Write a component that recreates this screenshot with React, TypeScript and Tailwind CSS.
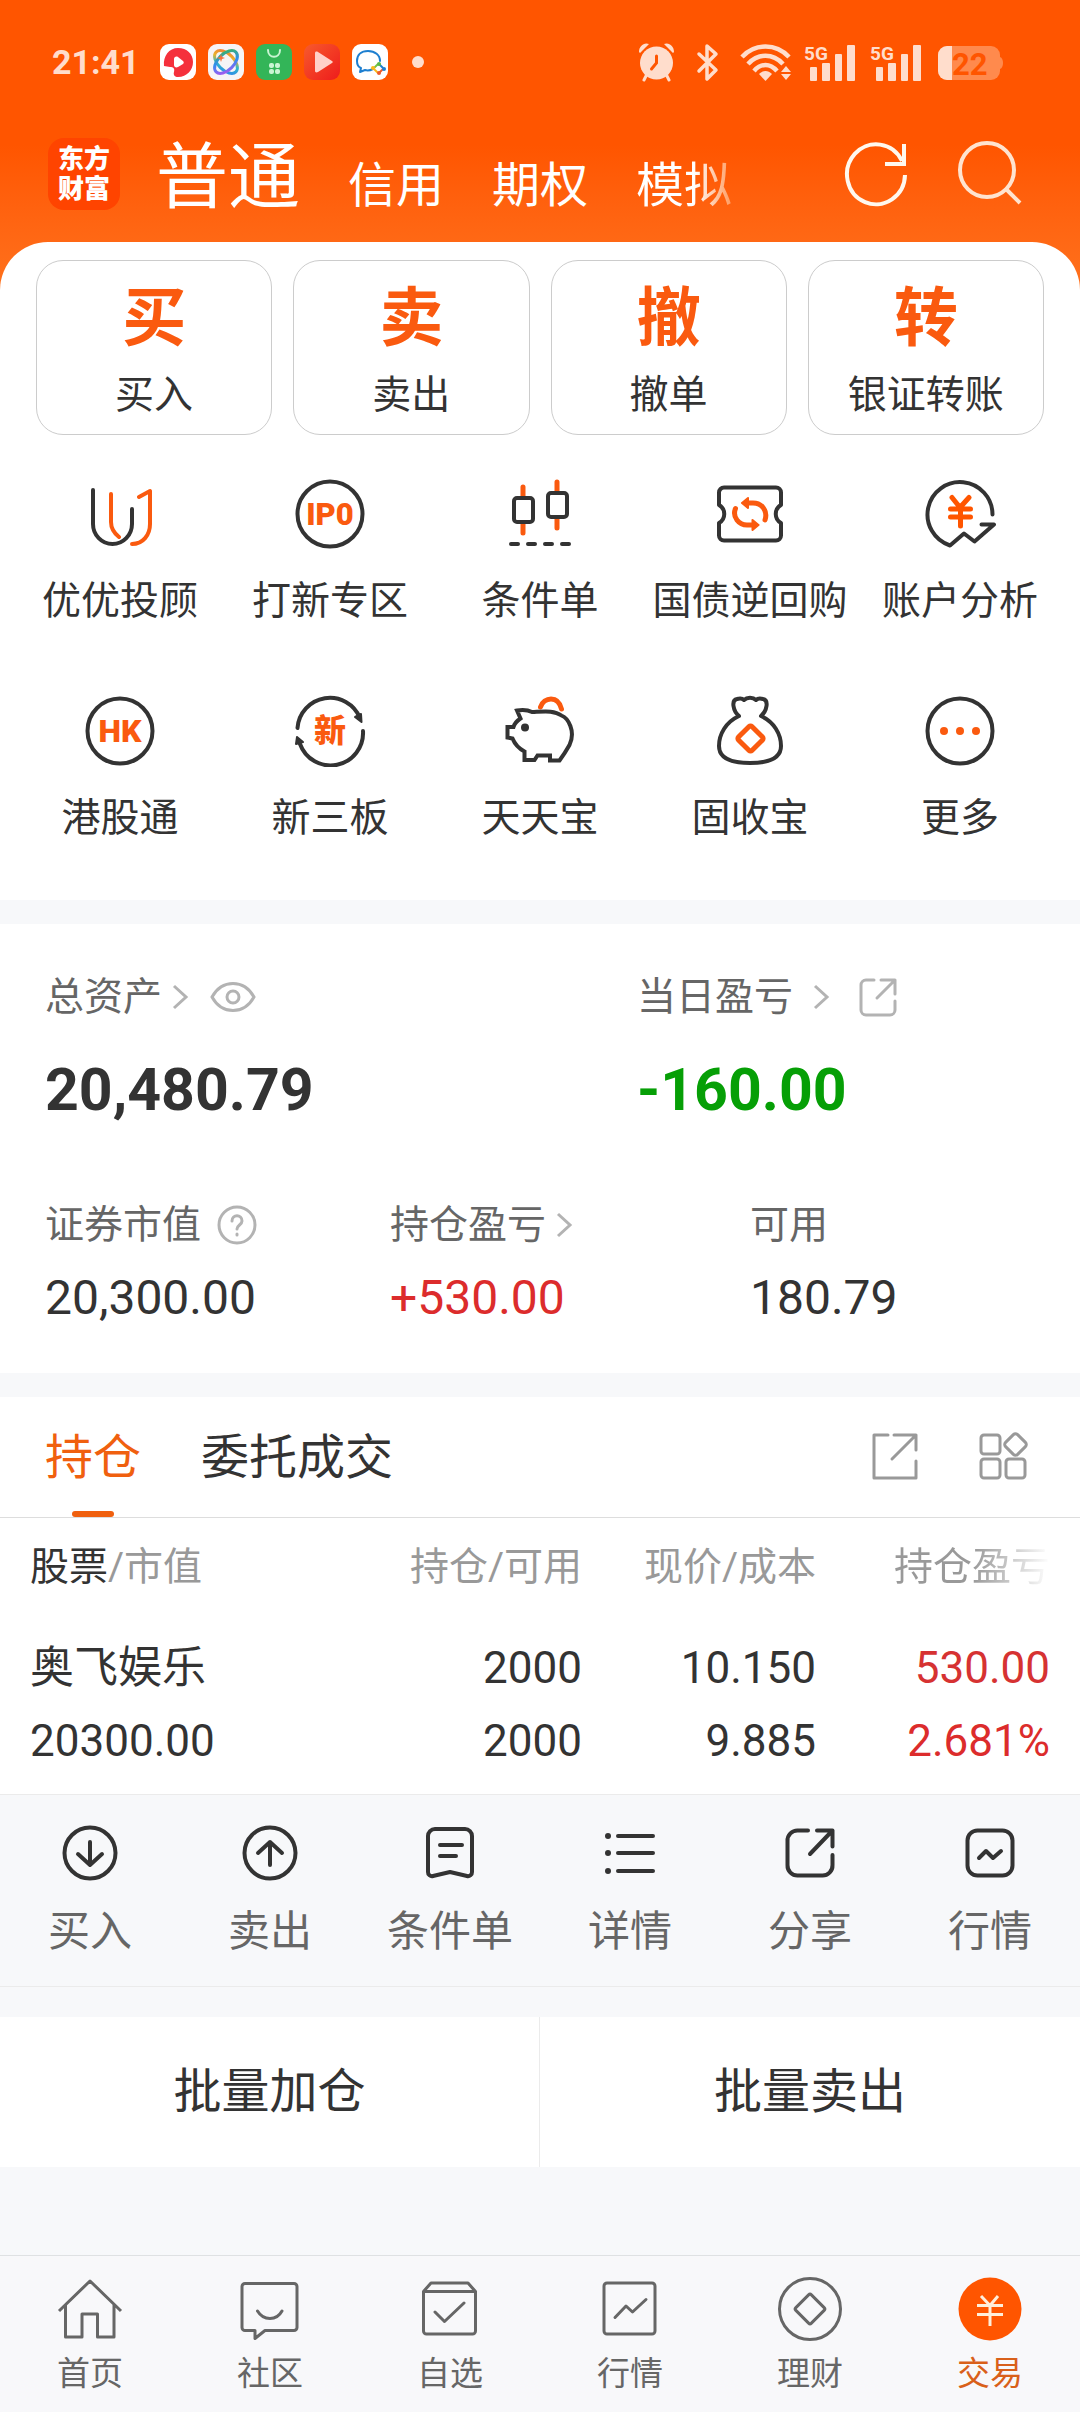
import React from 'react';

const INK = '#333333';
const ORANGE = '#fa5a0f';
const PALE = '#ffddcc';

type IconProps = { size?: number; children: React.ReactNode; color?: string; width?: number };

function Icon({ size = 72, color = INK, width = 4, children }: IconProps) {
  return (
    <svg
      width={size}
      height={size}
      viewBox={`0 0 ${size} ${size}`}
      fill="none"
      stroke={color}
      strokeWidth={width}
      strokeLinecap="round"
      strokeLinejoin="round"
      className="shrink-0"
      aria-hidden="true"
    >
      {children}
    </svg>
  );
}

/* ---------- status bar ---------- */

function Signal() {
  return (
    <svg width="52" height="40" viewBox="0 0 52 40" fill={PALE} aria-hidden="true">
      <text x="0" y="18" fontSize="19" fontWeight="700" fontFamily="Roboto, sans-serif">5G</text>
      <rect x="6" y="25" width="7" height="14" rx="1" />
      <rect x="18" y="21" width="8" height="18" rx="1" />
      <rect x="31" y="12" width="7" height="27" rx="1" />
      <rect x="43" y="3" width="8" height="36" rx="1" />
    </svg>
  );
}

function StatusBar() {
  return (
    <div className="flex h-10 items-center justify-between pr-5 pl-1">
      <div className="flex items-center gap-3">
        <span className="mr-3 w-[84px] text-[34px] leading-10 font-bold text-[#ffddcc]">21:41</span>
        <svg width="36" height="36" viewBox="0 0 36 36" aria-hidden="true">
          <rect width="36" height="36" rx="9" fill="#fff" />
          <path d="M4 22C3 12 9 4 18 4s15 6 15 14-6 15-15 15c-3 0-5-2-4-5 1-4-1-5-4-5z" fill="#f5303c" />
          <path d="M14 15c0-2 2-3 4-2l5 4c1 1 1 2 0 3l-5 3c-2 1-4 0-4-2z" fill="#fff" />
        </svg>
        <svg width="36" height="36" viewBox="0 0 36 36" fill="none" aria-hidden="true">
          <defs>
            <linearGradient id="orbit" x1="0" y1="0" x2="1" y2="1">
              <stop offset="0" stopColor="#f7703a" />
              <stop offset="0.35" stopColor="#e8b32c" />
              <stop offset="0.6" stopColor="#2fb8c9" />
              <stop offset="1" stopColor="#2f7df0" />
            </linearGradient>
            <linearGradient id="orbit2" x1="1" y1="0" x2="0" y2="1">
              <stop offset="0" stopColor="#3cba4e" />
              <stop offset="0.5" stopColor="#2f8df0" />
              <stop offset="1" stopColor="#c04df0" />
            </linearGradient>
          </defs>
          <rect width="36" height="36" rx="9" fill="#f6f4f6" />
          <ellipse cx="18" cy="18" rx="14" ry="8" transform="rotate(45 18 18)" stroke="url(#orbit)" strokeWidth="3" />
          <ellipse cx="18" cy="18" rx="14" ry="8" transform="rotate(-45 18 18)" stroke="url(#orbit2)" strokeWidth="3" />
          <path d="M13 10l1 3 3 1-3 1-1 3-1-3-3-1 3-1z" fill="#f7703a" />
        </svg>
        <svg width="36" height="36" viewBox="0 0 36 36" fill="none" aria-hidden="true">
          <rect width="36" height="36" rx="9" fill="#33b558" />
          <path d="M12 6c0 9 12 9 12 0" stroke="#c9f5d3" strokeWidth="2" strokeLinecap="round" />
          <g fill="#c9f5d3">
            <rect x="13" y="19" width="5" height="5" rx="2" />
            <rect x="19" y="19" width="5" height="5" rx="2" />
            <rect x="13" y="25" width="5" height="5" rx="2" />
            <rect x="19" y="25" width="5" height="5" rx="2" />
          </g>
        </svg>
        <svg width="36" height="36" viewBox="0 0 36 36" aria-hidden="true">
          <defs>
            <linearGradient id="play" x1="0" y1="0" x2="1" y2="1">
              <stop offset="0" stopColor="#f75a2c" />
              <stop offset="1" stopColor="#ee1c1c" />
            </linearGradient>
          </defs>
          <rect width="36" height="36" rx="9" fill="url(#play)" />
          <path d="M11 9c0-1 1-2 3-1l14 9c1 1 1 1 0 2l-14 9c-2 1-3 0-3-1z" fill="#ffd0c8" />
        </svg>
        <svg width="36" height="36" viewBox="0 0 36 36" fill="none" aria-hidden="true">
          <rect width="36" height="36" rx="9" fill="#fff" />
          <path d="M28 17C28 11 23 7 16 7S5 11 5 17c0 3 1 6 4 7l-1 4 5-2c3 1 6 0 8-1" stroke="#1d7fd0" strokeWidth="2" strokeLinecap="round" strokeLinejoin="round" />
          <path d="M22 24l4-4" stroke="#7ac143" strokeWidth="2" />
          <path d="M27 20l4 4" stroke="#1d7fd0" strokeWidth="2" />
          <path d="M31 25l-4 4" stroke="#ef5b2b" strokeWidth="2" />
          <path d="M26 29l-4-4" stroke="#f9b81a" strokeWidth="2" />
          <circle cx="27" cy="20" r="2" fill="#57b947" />
          <circle cx="32" cy="25" r="2" fill="#1d7fd0" />
          <circle cx="27" cy="29" r="2" fill="#ef5b2b" />
          <circle cx="21" cy="24" r="2" fill="#f9b81a" />
        </svg>
        <span className="ml-3 size-3 rounded-full bg-[#ffddcc]" />
      </div>
      <div className="flex items-center">
        <svg width="38" height="40" viewBox="0 0 38 40" aria-hidden="true">
          <circle cx="18.500" cy="21" r="16.500" fill={PALE} />
          <path d="M8 34l-2 4M29 34l2 4" stroke={PALE} strokeWidth="3" strokeLinecap="round" />
          <path d="M1 10C1 4 6 0 11 2L2 11zM36 10C36 4 31 0 26 2l9 9z" fill={PALE} />
          <path d="M18.500 14v7l-5 6" fill="none" stroke="#ff5500" strokeWidth="3" strokeLinecap="round" />
        </svg>
        <svg width="24" height="40" viewBox="0 0 24 40" fill="none" stroke={PALE} strokeWidth="3.500" strokeLinejoin="round" strokeLinecap="round" className="ml-5" aria-hidden="true">
          <path d="M3 12l17 16-9 9V4l9 8L3 29" />
        </svg>
        <svg width="52" height="40" viewBox="0 0 52 40" fill="none" stroke={PALE} strokeWidth="4.500" className="ml-5" aria-hidden="true">
          <path d="M2 15c13-14 34-14 47 0" />
          <path d="M8 22c10-11 25-11 35 0" />
          <path d="M14 29c7-8 16-8 23 0" />
          <path d="M19 32c4-4 9-4 13 0l-6.500 7z" fill={PALE} stroke="none" />
          <path d="M46 24l5 6H41zM41 32h10l-5 6z" fill={PALE} stroke="none" />
        </svg>
        <span className="ml-3 flex gap-3.5">
          <Signal />
          <Signal />
        </span>
        <svg width="66" height="40" viewBox="0 0 66 40" className="ml-4" aria-hidden="true">
          <defs>
            <clipPath id="cell"><rect y="4" width="62" height="34" rx="9" /></clipPath>
          </defs>
          <g clipPath="url(#cell)">
            <rect width="62" height="40" fill="#ff8a4d" />
            <rect width="14" height="40" fill={PALE} />
          </g>
          <path d="M62 15c4 1 4 11 0 12z" fill="#ff8a4d" />
          <text x="14" y="33" fontSize="31" fontWeight="700" fontFamily="Roboto, sans-serif" fill="#ff5500">22</text>
        </svg>
      </div>
    </div>
  );
}

/* ---------- header ---------- */

function Header() {
  return (
    <header className="-mb-12 bg-linear-to-b from-[#ff5500] from-50% to-[#ff711c] pt-[42px] pr-14 pb-[76px] pl-12">
      <StatusBar />
      <div className="mt-[52px] flex h-20 items-center">
        <a href="#home" className="mr-9 flex size-[72px] shrink-0 flex-col items-center justify-center rounded-2xl bg-[#ff4400] text-[26px] leading-[30px] font-black text-white">
          <span>东方</span>
          <span>财富</span>
        </a>
        <nav className="mt-4 flex items-baseline gap-12 text-5xl leading-20 text-white">
          <button className="text-7xl leading-20">普通</button>
          <button>信用</button>
          <button>期权</button>
          <button className="bg-linear-to-r from-white from-60% to-[#ff9a5c] bg-clip-text text-transparent">模拟</button>
        </nav>
        <button aria-label="刷新" className="ml-auto">
          <svg width="64" height="68" viewBox="0 0 64 68" fill="none" stroke="#fff8ee" strokeWidth="4" aria-hidden="true">
            <path d="M61 35A29 30 0 1 1 58 21M60 4v20H41" />
          </svg>
        </button>
        <button aria-label="搜索" className="ml-12">
          <svg width="68" height="68" viewBox="0 0 68 68" fill="none" stroke="#ffe3cf" strokeWidth="4" aria-hidden="true">
            <circle cx="31" cy="30" r="27" />
            <path d="M50 49l14 14" />
          </svg>
        </button>
      </div>
    </header>
  );
}

const trades = [
  ['买', '买入'],
  ['卖', '卖出'],
  ['撤', '撤单'],
  ['转', '银证转账'],
];

function Trades() {
  return (
    <div className="grid grid-cols-4 gap-[21px] px-9 pt-[18px]">
      {trades.map(([glyph, label]) => (
        <button key={label} className="flex flex-col items-center rounded-[27px] border border-[#cccccc] pt-5 pb-[15px]">
          <span className="text-[64px] leading-[76px] font-bold text-[#fa5a0f]">{glyph}</span>
          <span className="mt-3.5 text-[39px] leading-12">{label}</span>
        </button>
      ))}
    </div>
  );
}

const services: { label: string; art: React.ReactNode }[] = [
  {
    label: '优优投顾',
    art: (
      <>
        <path d="M9 12V46a19.500 20 0 0 0 39 0V31" />
        <path d="M27 16V44c0 7 3 11 8 15M55 19l11-6V46c0 11-7 20-18 20" stroke={ORANGE} />
      </>
    ),
  },
  {
    label: '打新专区',
    art: (
      <>
        <circle cx="36" cy="36" r="32.500" />
        <text x="36" y="47" textAnchor="middle" fontSize="31" fontWeight="900" fontFamily="Roboto, sans-serif" fill={ORANGE} stroke="none">IP0</text>
      </>
    ),
  },
  {
    label: '条件单',
    art: (
      <>
        <path d="M19 9v10M19 45v10M53 4v10M53 40v10" stroke={ORANGE} strokeWidth="5" />
        <rect x="10" y="20" width="19" height="24" rx="3" />
        <rect x="44" y="15" width="19" height="24" rx="3" />
        <path d="M7 66h7M24 66h7M41 66h7M58 66h7" />
      </>
    ),
  },
  {
    label: '国债逆回购',
    art: (
      <>
        <path d="M10 9.500H62a5 5 0 0 1 5 5V27c-7 4-7 14 0 18V57.500a5 5 0 0 1-5 5H10a5 5 0 0 1-5-5V45c7-4 7-14 0-18V14.500a5 5 0 0 1 5-5z" />
        <g stroke={ORANGE} strokeWidth="5">
          <path d="M21.500 30.500C18 39 25 47 33 47h5M51 42c3-9-3-17-12-17h-5" />
          <path d="M38.500 42v10l6-5zM34 20v10l-6-5z" fill={ORANGE} strokeWidth="2" />
        </g>
      </>
    ),
  },
  {
    label: '账户分析',
    art: (
      <>
        <path d="M68.500 36.500A32.500 32.500 0 1 0 26 67.500L40 55.500l10.500 8L70 46.500H57.500" />
        <path d="M28 19.500l8 10 9-10M36.500 30v18M26.500 31h20M26.500 39h20" stroke="#ff5500" strokeWidth="5" />
      </>
    ),
  },
  {
    label: '港股通',
    art: (
      <>
        <circle cx="36" cy="36" r="32.500" />
        <text x="36" y="47" textAnchor="middle" fontSize="32" fontWeight="900" fontFamily="Roboto, sans-serif" fill={ORANGE} stroke="none">HK</text>
      </>
    ),
  },
  {
    label: '新三板',
    art: (
      <>
        <path d="M3.500 33A32.500 32.500 0 0 1 66 23M69 36A32.500 32.500 0 0 1 6 49" />
        <path d="M61 22l6-3 .500 8zM3 42l6 5-7 2z" fill={INK} strokeWidth="2" />
        <text x="36" y="47" textAnchor="middle" fontSize="32" fontWeight="900" fontFamily="'Noto Sans CJK SC', sans-serif" fill={ORANGE} stroke="none">新</text>
      </>
    ),
  },
  {
    label: '天天宝',
    art: (
      <>
        <path d="M36.500 12C40 2 54 0 57.500 14" stroke={ORANGE} strokeWidth="5" />
        <path strokeLinejoin="miter" d="M13 15.500L16.500 23.500Q11 27 9.500 32H3.500V42.500L8.500 43.500Q12 52 20.500 56.500V65H30.500L33.500 60.500H46V65.500H55.500Q61 58 65.500 50C72 36 64 23 57.500 20.500C50 15 40 16.500 28 17C22 14 16 15 13 15.500z" />
        <circle cx="21" cy="32.500" r="4" fill={INK} stroke="none" />
      </>
    ),
  },
  {
    label: '固收宝',
    art: (
      <>
        <path d="M25 21C19 16 17 5 23 4C26 3 28 3 30 5C33 2 39 2 42 5C44 3 46 3 49 4C55 5 53 16 47 21C60 27 67 39 67 51C67 63 55 68 36 68C17 68 5 63 5 51C5 39 12 27 25 21z" />
        <rect x="27" y="34" width="19" height="19" rx="2" transform="rotate(45 36.500 43.500)" stroke={ORANGE} strokeWidth="5" />
      </>
    ),
  },
  {
    label: '更多',
    art: (
      <>
        <circle cx="36" cy="36" r="32.500" />
        <g fill={ORANGE} stroke="none">
          <circle cx="20" cy="36" r="4" />
          <circle cx="36" cy="36" r="4" />
          <circle cx="52" cy="36" r="4" />
        </g>
      </>
    ),
  },
];

function Services() {
  return (
    <div className="grid grid-cols-5 gap-y-[70px] px-[15px] pt-[43px] pb-[58px]">
      {services.map(({ label, art }) => (
        <button key={label} className="flex flex-col items-center gap-[27px]">
          <Icon>{art}</Icon>
          <span className="text-[39px] leading-12 whitespace-nowrap">{label}</span>
        </button>
      ))}
    </div>
  );
}

/* ---------- assets ---------- */

function Chevron() {
  return (
    <svg width="18" height="28" viewBox="0 0 18 28" fill="none" stroke="#b3b3b3" strokeWidth="3" aria-hidden="true">
      <path d="M2 3l12 11L2 25" />
    </svg>
  );
}

function Assets() {
  return (
    <section className="bg-white px-[45px] pt-[49px] pb-[47px]">
      <div className="grid grid-cols-[592px_1fr]">
        <div>
          <div className="flex h-12 items-center text-[39px] leading-12 text-[#666666]">
            <button className="flex items-center gap-2.5">总资产<Chevron /></button>
            <button aria-label="隐藏金额" className="ml-5">
              <svg width="46" height="32" viewBox="0 0 46 32" fill="none" stroke="#b3b3b3" strokeWidth="3" aria-hidden="true">
                <path d="M2 16C12-2 34-2 44 16C34 34 12 34 2 16z" />
                <circle cx="23" cy="16" r="6" />
              </svg>
            </button>
          </div>
          <div className="mt-[33px] text-[59px] leading-[72px] font-bold">20,480.79</div>
        </div>
        <div>
          <div className="flex h-12 items-center text-[39px] leading-12 text-[#666666]">
            <button className="flex items-center gap-5">当日盈亏<Chevron /></button>
            <button aria-label="分享当日盈亏" className="ml-6">
              <Icon size={44} color="#b3b3b3" width={3}>
                <path d="M19 5H11a5 5 0 0 0-5 5v25a5 5 0 0 0 5 5h24a5 5 0 0 0 5-5V26M26 5h14v14M40 5L22 23" />
              </Icon>
            </button>
          </div>
          <div className="mt-[33px] text-[59px] leading-[72px] font-bold text-[#069f06]">-160.00</div>
        </div>
      </div>
      <div className="mt-[75px] grid grid-cols-[345px_360px_1fr]">
        <div>
          <div className="flex h-12 items-center gap-4 text-[39px] leading-12 text-[#666666]">
            证券市值
            <button aria-label="说明">
              <Icon size={40} color="#b3b3b3" width={3}>
                <circle cx="20" cy="20" r="18" />
                <path d="M15 16c0-7 10-7 10 0 0 4-5 4-5 8M20 29v1" />
              </Icon>
            </button>
          </div>
          <div className="mt-[21px] text-5xl leading-14">20,300.00</div>
        </div>
        <div>
          <button className="flex h-12 items-center gap-2.5 text-[39px] leading-12 text-[#666666]">持仓盈亏<Chevron /></button>
          <div className="mt-[21px] text-5xl leading-14 text-[#dc2c2c]">+530.00</div>
        </div>
        <div>
          <div className="text-[39px] leading-12 text-[#666666]">可用</div>
          <div className="mt-[21px] text-5xl leading-14">180.79</div>
        </div>
      </div>
    </section>
  );
}

/* ---------- positions ---------- */

const actions: { label: string; art: React.ReactNode }[] = [
  { label: '买入', art: <><circle cx="30" cy="30" r="25.500" /><path d="M30 19v23M18 31l12 11 12-11" /></> },
  { label: '卖出', art: <><circle cx="30" cy="30" r="25.500" /><path d="M30 42V19M18 30l12-11 12 11" /></> },
  {
    label: '条件单',
    art: <path d="M15 6H45a7 7 0 0 1 7 7V49a4 4 0 0 1-5 4L30 49l-17 4a4 4 0 0 1-5-4V13a7 7 0 0 1 7-7zM20 22h22M20 33h16" />,
  },
  {
    label: '详情',
    art: (
      <>
        <path d="M18 13H53M18 30H53M18 48H53" />
        <g fill={INK} stroke="none">
          <circle cx="8" cy="13" r="3" />
          <circle cx="8" cy="30" r="3" />
          <circle cx="8" cy="48" r="3" />
        </g>
      </>
    ),
  },
  {
    label: '分享',
    art: <path d="M28 7.500H18A10 10 0 0 0 7.500 18V42A10 10 0 0 0 18 52.500H42A10 10 0 0 0 52.500 42V32M37 7.500H52.500V23.500M52.500 7.500L30 31" />,
  },
  { label: '行情', art: <><rect x="7.500" y="7.500" width="45" height="45" rx="10" /><path d="M19 35l7-7 7 7 8-7" /></> },
];

function Positions() {
  return (
    <section className="mt-6 bg-white">
      <div className="flex h-[121px] items-stretch border-b border-[#dddddd] pr-[51px] pl-[45px] text-5xl leading-[122px]">
        <button className="relative text-[#f0600f]">
          持仓
          <span className="absolute bottom-0 left-1/2 h-1.5 w-[42px] -translate-x-1/2 rounded-full bg-[#f0600f]" />
        </button>
        <button className="ml-[60px]">委托成交</button>
        <button aria-label="分享持仓" className="ml-auto">
          <Icon size={52} color="#999999" width={3}>
            <path d="M19 4H5V47H47V30M25 4H47V19M47 4L23 28" />
          </Icon>
        </button>
        <button aria-label="布局" className="ml-14">
          <Icon size={52} color="#999999" width={3}>
            <rect x="4" y="4" width="19" height="19" rx="3" />
            <rect x="4" y="28" width="19" height="19" rx="3" />
            <rect x="29" y="28" width="19" height="19" rx="3" />
            <rect x="30" y="5" width="17" height="17" rx="3" transform="rotate(45 38.500 13.500)" />
          </Icon>
        </button>
      </div>
      <table className="w-full table-fixed text-right text-[44px] leading-[73px]">
        <thead className="text-[39px] leading-12 text-[#999999]">
          <tr>
            <th scope="col" className="pt-[25px] pb-[41px] pl-[30px] text-left font-normal"><span className="text-[#333333]">股票</span>/市值</th>
            <th scope="col" className="w-[234px] pt-[25px] pb-[41px] font-normal">持仓/可用</th>
            <th scope="col" className="w-[234px] pt-[25px] pb-[41px] font-normal">现价/成本</th>
            <th scope="col" className="w-[264px] pt-[25px] pr-[30px] pb-[41px] font-normal">
              <span className="bg-linear-to-r from-[#999999] from-50% to-[#ffffff] bg-clip-text text-transparent">持仓盈亏</span>
            </th>
          </tr>
        </thead>
        <tbody>
          <tr>
            <td className="pl-[30px] text-left">奥飞娱乐</td>
            <td>2000</td>
            <td>10.150</td>
            <td className="pr-[30px] text-[#d63232]">530.00</td>
          </tr>
          <tr>
            <td className="pb-4 pl-[30px] text-left">20300.00</td>
            <td className="pb-4">2000</td>
            <td className="pb-4">9.885</td>
            <td className="pr-[30px] pb-4 text-[#dc2c2c]">2.681%</td>
          </tr>
        </tbody>
      </table>
      <div className="grid grid-cols-6 border-y border-[#ebebeb] bg-[#f7f8fa] pt-7 pb-[29px]">
        {actions.map(({ label, art }) => (
          <button key={label} className="flex flex-col items-center gap-6 text-[42px] leading-[50px] text-[#666666]">
            <Icon size={60}>{art}</Icon>
            {label}
          </button>
        ))}
      </div>
    </section>
  );
}

/* ---------- bottom navigation ---------- */

const tabs: { label: string; art: React.ReactNode }[] = [
  { label: '首页', art: <path d="M2 35L33 5l31 30M8.500 29V61H25V38H40.500V61H57V29" strokeLinecap="butt" /> },
  {
    label: '社区',
    art: <path d="M8 7.500H57a3 3 0 0 1 3 3V51.500a3 3 0 0 1-3 3H28L18 62.500V54.500H8a3 3 0 0 1-3-3V10.500a3 3 0 0 1 3-3zM20.500 35c6 10 19 10 24.500 0" />,
  },
  {
    label: '自选',
    art: <path d="M6.500 15.500L14 7H51l7.500 8.500V55a3 3 0 0 1-3 3H9.500a3 3 0 0 1-3-3zM6.500 15.500H58.500M18 36l9.500 9.500L47 27" />,
  },
  { label: '行情', art: <><rect x="7" y="7" width="51" height="51" rx="3" /><path d="M18 41.500L29 30l6.500 6L49 23.500" /></> },
  {
    label: '理财',
    art: <><circle cx="33" cy="33" r="30.500" /><rect x="22" y="22" width="22" height="22" rx="2" transform="rotate(45 33 33)" /></>,
  },
  {
    label: '交易',
    art: (
      <>
        <circle cx="33" cy="33" r="31.500" fill="#ff5500" stroke="none" />
        <path d="M24 20l9 9.500 8-9.500M33 29.500V50M20 29.500H46M20 38.500H46" stroke="#ffeeda" strokeLinecap="butt" />
      </>
    ),
  },
];

function BottomNav() {
  return (
    <nav className="mt-auto grid grid-cols-6 border-t border-[#dfe1e3] bg-[#f8f8fa] pt-5 pb-[18px]">
      {tabs.map(({ label, art }) => (
        <a
          key={label}
          href={`#${label}`}
          aria-current={label === '交易' ? 'page' : undefined}
          className="flex flex-col items-center gap-3 text-[33px] leading-10 text-[#666666] aria-[current]:text-[#d9601a]"
        >
          <Icon size={66} color="#666666" width={3}>{art}</Icon>
          {label}
        </a>
      ))}
    </nav>
  );
}

export default function App() {
  return (
    <div className="flex min-h-screen flex-col bg-[#f7f8fa] font-[Roboto,'Noto_Sans_CJK_SC',sans-serif] text-[#333333]">
      <Header />
      <section className="mb-6 rounded-t-[48px] bg-white">
        <Trades />
        <Services />
      </section>
      <Assets />
      <Positions />
      <div className="mt-[30px] grid grid-cols-2 divide-x divide-[#ebebeb] bg-white text-5xl leading-[150px]">
        <button>批量加仓</button>
        <button>批量卖出</button>
      </div>
      <BottomNav />
    </div>
  );
}
